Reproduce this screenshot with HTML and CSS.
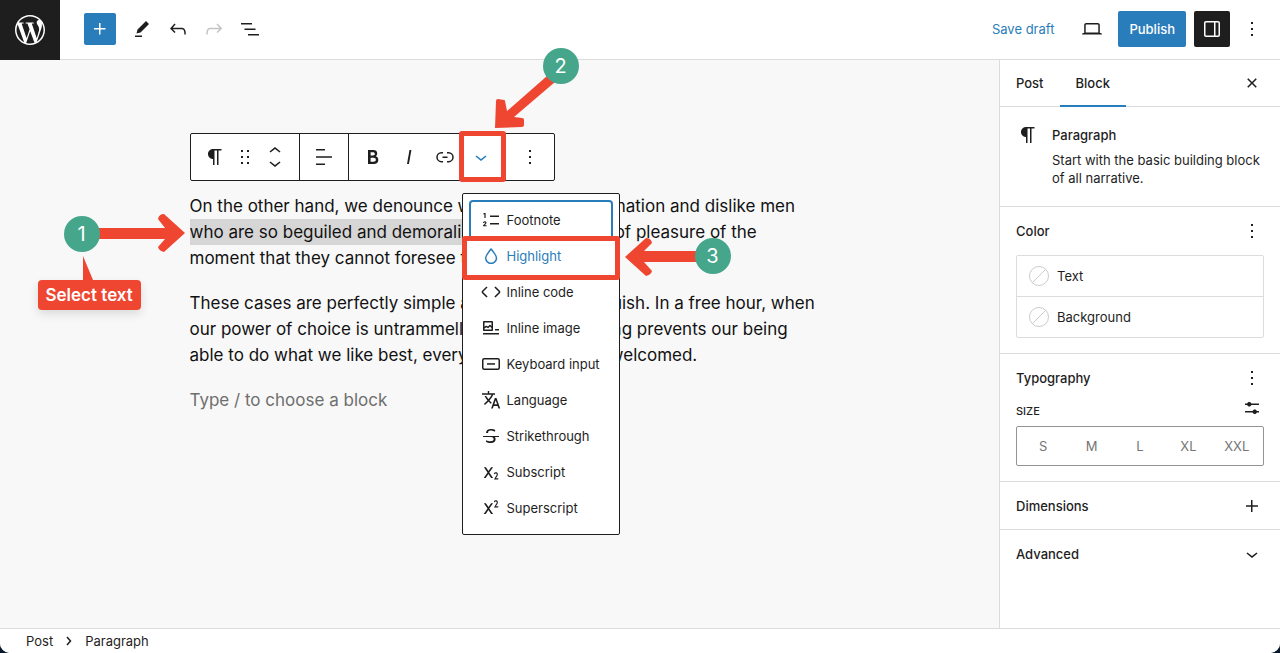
FILE: index.html
```html
<!DOCTYPE html>
<html lang="en">
<head>
    <meta charset="UTF-8">
    <meta name="viewport" content="width=device-width, initial-scale=1.0">
    <title>Edit Post</title>
    <link rel="stylesheet" href="styles.css">
</head>
<body>
    <div class="editor">
        <header class="header">
            <a class="logo" href="#" aria-label="View Posts">
                <svg width="30" height="30" viewBox="0 0 24 24"><path d="M21.469 6.825c.84 1.537 1.318 3.3 1.318 5.175 0 3.979-2.156 7.456-5.363 9.325l3.295-9.527c.615-1.54.82-2.771.82-3.864 0-.405-.026-.78-.07-1.11m-7.981.105c.647-.03 1.232-.105 1.232-.105.582-.075.514-.93-.067-.899 0 0-1.755.135-2.88.135-1.064 0-2.85-.15-2.85-.15-.585-.03-.661.855-.075.885 0 0 .54.061 1.125.09l1.68 4.605-2.37 7.08L5.354 6.9c.649-.03 1.234-.1 1.234-.1.585-.075.516-.93-.065-.896 0 0-1.746.138-2.874.138-.2 0-.438-.008-.69-.015C4.911 3.15 8.235 1.215 12 1.215c2.809 0 5.365 1.072 7.286 2.833-.046-.003-.091-.009-.141-.009-1.06 0-1.812.923-1.812 1.914 0 .89.513 1.643 1.06 2.531.411.72.89 1.643.89 2.977 0 .915-.354 1.994-.821 3.479l-1.075 3.585-3.9-11.61.001.014zM12 22.784c-1.059 0-2.081-.153-3.048-.437l3.237-9.406 3.315 9.087c.024.053.05.101.078.149-1.12.393-2.325.609-3.582.609M1.211 12c0-1.564.336-3.05.935-4.39L7.29 21.709C3.694 19.96 1.212 16.271 1.211 12M12 0C5.385 0 0 5.385 0 12s5.385 12 12 12 12-5.385 12-12S18.615 0 12 0"/></svg>
            </a>
            <div class="header-tools">
                <button class="inserter" aria-label="Add block">
                    <svg width="24" height="24" viewBox="0 0 24 24"><path d="M11 12.5V17.5H12.5V12.5H17.5V11H12.5V6H11V11H6V12.5H11Z"/></svg>
                </button>
                <div class="tool-group">
                    <button class="icon-button" aria-label="Tools">
                        <svg width="24" height="24" viewBox="0 0 24 24"><path d="m19 7-3-3-8.500 8.500-1 4 4-1L19 7Zm-7 11.500H5V20h7v-1.500Z"/></svg>
                    </button>
                    <button class="icon-button" aria-label="Undo">
                        <svg width="24" height="24" viewBox="0 0 24 24"><path d="M18.3 11.700c-.6-.6-1.400-.9-2.300-.9H6.700l2.900-3.300-1.100-1-4.500 5L8.500 16l1-1-2.700-2.700H16c.5 0 .9.2 1.300.5 1 1 1 3.400 1 4.500v.3h1.500v-.2c0-1.500 0-4.300-1.500-5.700z"/></svg>
                    </button>
                    <button class="icon-button" aria-label="Redo" disabled>
                        <svg width="24" height="24" viewBox="0 0 24 24"><path d="M15.600 6.500l-1.100 1 2.900 3.300H8c-.9 0-1.700.3-2.300.9-1.400 1.500-1.400 4.200-1.400 5.600v.2h1.500v-.3c0-1.100 0-3.500 1-4.500.3-.3.7-.5 1.300-.5h9.200L14.500 15l1.100 1.100 4.600-4.600-4.600-5z"/></svg>
                    </button>
                    <button class="icon-button" aria-label="Document overview">
                        <svg width="24" height="24" viewBox="0 0 24 24"><path d="M3 6h11v1.500H3V6Zm3.500 5.500h11V13h-11v-1.500ZM21 17H10v1.500h11V17Z"/></svg>
                    </button>
                </div>
            </div>
            <div class="header-settings">
                <button class="save-draft">Save draft</button>
                <button class="icon-button" aria-label="Preview">
                    <svg width="24" height="24" viewBox="0 0 24 24"><path d="M20.500 16h-.7V8c0-1.100-.9-2-2-2H6.200c-1.100 0-2 .9-2 2v8h-.7c-.8 0-1.500.7-1.500 1.500h20c0-.8-.7-1.500-1.500-1.500zM5.700 8c0-.3.2-.5.5-.5h11.600c.3 0 .5.2.5.5v7.600H5.700V8z"/></svg>
                </button>
                <button class="publish">Publish</button>
                <button class="icon-button pressed" aria-label="Settings">
                    <svg width="24" height="24" viewBox="0 0 24 24"><path d="M18 4H6c-1.100 0-2 .9-2 2v12c0 1.100.9 2 2 2h12c1.100 0 2-.9 2-2V6c0-1.100-.9-2-2-2zm-4 14.500H6c-.3 0-.5-.2-.5-.5V6c0-.3.2-.5.5-.5h8v13zm4.500-.5c0 .3-.2.5-.5.5h-2.500v-13H18c.3 0 .5.2.5.5v12z"/></svg>
                </button>
                <button class="icon-button narrow" aria-label="Options">
                    <svg width="24" height="24" viewBox="0 0 24 24"><path d="M13 19h-2v-2h2v2zm0-6h-2v-2h2v2zm0-6h-2V5h2v2z"/></svg>
                </button>
            </div>
        </header>

        <div class="body">
            <main class="canvas">
                <div class="post">
                    <div class="toolbar">
                        <div class="toolbar-group block-group">
                            <button class="icon-button" aria-label="Paragraph">
                                <svg width="24" height="24" viewBox="0 0 24 24"><path d="m9.996 14v-.225h.004v6.225h1.500v-14.500h2.500v14.500h1.500v-14.500h3v-1.500h-8.504c-2.761 0-5 2.239-5 5s2.239 5 5 5z"/></svg>
                            </button>
                            <button class="icon-button drag" aria-label="Drag">
                                <svg width="24" height="24" viewBox="0 0 24 24"><path d="M8 7h2V5H8v2zm0 6h2v-2H8v2zm0 6h2v-2H8v2zm6-14v2h2V5h-2zm0 8h2v-2h-2v2zm0 6h2v-2h-2v2z"/></svg>
                            </button>
                            <div class="movers">
                                <button aria-label="Move up"><svg width="24" height="24" viewBox="0 0 24 24"><path d="M6.500 12.400L12 8l5.500 4.400-.9 1.200L12 10l-4.500 3.600-1-1.200z"/></svg></button>
                                <button aria-label="Move down"><svg width="24" height="24" viewBox="0 0 24 24"><path d="M17.500 11.600L12 16l-5.500-4.400.9-1.200L12 14l4.500-3.600 1 1.200z"/></svg></button>
                            </div>
                        </div>
                        <div class="toolbar-group">
                            <button class="icon-button" aria-label="Align text">
                                <svg width="24" height="24" viewBox="0 0 24 24"><path d="M4 4h9v1.500H4zM4 11.200h16v1.500H4zM4 18.500h9V20H4z"/></svg>
                            </button>
                        </div>
                        <div class="toolbar-group">
                            <button class="icon-button" aria-label="Bold">
                                <svg width="24" height="24" viewBox="0 0 24 24"><path d="M14.700 11.300c1-.6 1.500-1.600 1.500-3 0-2.300-1.300-3.400-4-3.400H7v14h5.800c1.400 0 2.500-.3 3.300-1 .8-.7 1.200-1.700 1.200-2.900.1-1.900-.8-3.100-2.600-3.700zm-5.100-4h2.300c.6 0 1.100.1 1.400.4.3.3.5.7.5 1.200s-.2 1-.5 1.200c-.3.3-.8.4-1.400.4H9.600V7.300zm4.600 9c-.4.3-1 .4-1.700.4H9.600v-3.900h2.900c.7 0 1.300.2 1.700.5.4.3.6.8.6 1.500s-.2 1.200-.6 1.500z"/></svg>
                            </button>
                            <button class="icon-button" aria-label="Italic">
                                <svg width="24" height="24" viewBox="0 0 24 24"><path d="M12.500 5L10 19h1.900l2.500-14z"/></svg>
                            </button>
                            <button class="icon-button" aria-label="Link">
                                <svg width="24" height="24" viewBox="0 0 24 24"><path d="M10 17.389H8.444A5.194 5.194 0 1 1 8.444 7H10v1.500H8.444a3.694 3.694 0 0 0 0 7.389H10v1.500ZM14 7h1.556a5.194 5.194 0 0 1 0 10.390H14v-1.500h1.556a3.694 3.694 0 0 0 0-7.390H14V7Zm-4.500 6h5v-1.500h-5V13Z"/></svg>
                            </button>
                            <button class="icon-button more" aria-label="More" aria-expanded="true">
                                <svg width="24" height="24" viewBox="0 0 24 24"><path d="M17.500 11.600L12 16l-5.500-4.400.9-1.200L12 14l4.500-3.600 1 1.200z"/></svg>
                            </button>
                        </div>
                        <div class="toolbar-group">
                            <button class="icon-button" aria-label="Block options">
                                <svg width="24" height="24" viewBox="0 0 24 24"><path d="M13 19h-2v-2h2v2zm0-6h-2v-2h2v2zm0-6h-2V5h2v2z"/></svg>
                            </button>
                        </div>
                    </div>

                    <div class="content">
                        <p>On the other hand, we denounce with righteous indignation and dislike men <mark>who are so beguiled and demoralised</mark> by the charms of pleasure of the moment that they cannot foresee the pain</p>
                        <p>These cases are perfectly simple and easy to distinguish. In a free hour, when our power of choice is untrammelled and when nothing prevents our being able to do what we like best, every pleasure is to be welcomed.</p>
                        <input class="new-block" type="text" aria-label="Empty block" placeholder="Type / to choose a block">
                    </div>

                    <div class="menu">
                        <button class="focused">
                            <svg width="24" height="24" viewBox="0 0 24 24"><path d="M11 7.500h9V9h-9zM11 15h9v1.500h-9zM5 5h1.600v5H5.400V6.200L4.400 6.500V5.400zM4 15c.1-1 .8-1.700 1.800-1.700s1.700.6 1.700 1.500c0 .6-.3 1-.8 1.500l-1 1h1.900v1H4v-.9l1.900-1.900c.3-.3.4-.5.4-.8s-.2-.5-.5-.5-.6.3-.6.8z"/></svg>
                            Footnote
                        </button>
                        <button class="active">
                            <svg width="24" height="24" viewBox="0 0 24 24"><path d="M17.200 10.900c-.5-1-1.200-2.100-2.100-3.200-.6-.9-1.300-1.700-2.100-2.600L12 4l-1 1.100c-.6.9-1.300 1.700-2 2.600-.8 1.200-1.500 2.300-2 3.200-.6 1.200-1 2.200-1 3 0 3.400 2.700 6.100 6.100 6.100s6.100-2.700 6.100-6.100c0-.8-.3-1.800-1-3zm-5.100 7.600c-2.500 0-4.600-2.100-4.600-4.600 0-.3.1-1 .8-2.300.5-.9 1.100-1.900 2-3.100.7-.9 1.300-1.700 1.800-2.300.7.8 1.300 1.600 1.800 2.300.8 1.100 1.500 2.200 2 3.100.7 1.300.8 2 .8 2.300 0 2.500-2.100 4.600-4.600 4.600z"/></svg>
                            Highlight
                        </button>
                        <button>
                            <svg width="24" height="24" viewBox="0 0 24 24"><path d="M20.800 10.700l-4.300-4.300-1.100 1.100 4.300 4.300c.1.1.1.3 0 .4l-4.300 4.300 1.100 1.100 4.300-4.300c.7-.8.7-1.900 0-2.600zM4.200 11.800l4.300-4.300-1-1-4.300 4.300c-.7.7-.7 1.800 0 2.500l4.300 4.300 1.100-1.100-4.300-4.300c-.2-.1-.2-.3-.1-.4z"/></svg>
                            Inline code
                        </button>
                        <button>
                            <svg width="24" height="24" viewBox="0 0 24 24"><path d="M4 18.500h16V17H4v1.500zM16 13v1.500h4V13h-4zM5.100 15h7.800c.6 0 1.100-.5 1.100-1.100V6.100c0-.6-.5-1.100-1.100-1.100H5.100C4.500 5 4 5.500 4 6.100v7.800c0 .6.5 1.100 1.100 1.100zm.4-8.500h7V10l-1-1c-.3-.3-.8-.3-1 0l-1.600 1.500-1.200-.7c-.3-.2-.6-.2-.9 0l-1.300 1V6.500zm0 6.100l1.800-1.300 1.300.8c.3.2.7.2.9-.1l1.500-1.400 1.500 1.400v1.500h-7v-.9z"/></svg>
                            Inline image
                        </button>
                        <button>
                            <svg width="24" height="24" viewBox="0 0 24 24"><path d="M8 11.200h8v1.500H8z"/><rect class="stroke" x="3.750" y="6.750" width="16.500" height="10.500" rx="1.500"/></svg>
                            Keyboard input
                        </button>
                        <button>
                            <svg width="24" height="24" viewBox="0 0 24 24"><path d="M17.500 10h-1.700l-3.700 10.500h1.700l.9-2.600h3.900l.9 2.600h1.700L17.500 10zm-2.200 6.300 1.400-4 1.400 4h-2.800zm-4.800-3.800c1.600-1.800 2.900-3.600 3.700-5.700H16V5.200h-5.800V3H8.800v2.200H3v1.500h9.600c-.7 1.600-1.800 3.100-3.100 4.600C8.600 10.200 7.800 9 7.200 8H5.600c.6 1.400 1.700 2.900 2.900 4.400l-2.400 2.400c-.3.4-.7.8-1.100 1.200l1 1 1.200-1.200c.8-.8 1.600-1.500 2.300-2.300.8.9 1.700 1.700 2.500 2.500l.6-1.500c-.7-.6-1.400-1.300-2.100-2z"/></svg>
                            Language
                        </button>
                        <button>
                            <svg width="24" height="24" viewBox="0 0 24 24"><path d="M9.100 9v-.5c0-.6.2-1.100.7-1.400.5-.3 1.200-.5 2-.5.7 0 1.400.1 2.100.3.7.2 1.400.5 2.100.9l.2-1.900c-.6-.3-1.200-.5-1.900-.7-.8-.1-1.600-.2-2.400-.2-1.500 0-2.700.3-3.600 1-.8.7-1.200 1.500-1.200 2.600V9h2zM20 12H4v1h8.300c.3.1.6.2.8.3.5.2.9.5 1.100.8.3.3.4.7.4 1.200 0 .7-.2 1.100-.8 1.500-.5.3-1.200.5-2.100.5-.8 0-1.600-.1-2.400-.3-.8-.2-1.500-.5-2.200-.8L7 18.100c.5.2 1.200.4 2 .6.8.2 1.600.3 2.400.3 1.700 0 3-.3 3.900-1 .9-.7 1.300-1.600 1.300-2.800 0-.9-.2-1.700-.7-2.200H20v-1z"/></svg>
                            Strikethrough
                        </button>
                        <button>
                            <svg width="24" height="24" viewBox="0 0 24 24"><path d="M16.900 18.300l.8-1.200c.4-.6.7-1.200.9-1.600.2-.4.3-.8.3-1.200 0-.3-.1-.7-.3-1-.1-.3-.4-.5-.6-.7-.3-.2-.6-.3-1-.3s-.8.1-1.100.2c-.3.1-.7.3-1 .6l.2 1.300c.3-.3.5-.5.8-.6s.6-.2.9-.2c.3 0 .5.1.7.2.2.2.2.4.2.7 0 .3-.1.5-.2.8-.1.3-.4.7-.8 1.300L15 19.400h4.300v-1.200h-2.400zM14.100 7.200h-2L9.500 11 6.900 7.200h-2l3.600 5.300L4.700 18h2l2.700-4 2.700 4h2l-3.800-5.500 3.800-5.300z"/></svg>
                            Subscript
                        </button>
                        <button>
                            <svg width="24" height="24" viewBox="0 0 24 24"><path d="M16.900 10.300l.8-1.200c.4-.6.7-1.200.9-1.600.2-.4.3-.8.3-1.200 0-.3-.1-.7-.3-1-.1-.3-.4-.5-.6-.7-.3-.2-.6-.3-1-.3s-.8.1-1.100.2c-.3.1-.7.3-1 .6l.2 1.300c.3-.3.5-.5.8-.6s.6-.2.9-.2c.3 0 .5.1.7.2.2.2.2.4.2.7 0 .3-.1.5-.2.8-.1.3-.4.7-.8 1.300L15 11.400h4.300v-1.200h-2.400zM14.100 7.200h-2L9.500 11 6.900 7.200h-2l3.600 5.300L4.700 18h2l2.700-4 2.700 4h2l-3.800-5.500 3.800-5.300z"/></svg>
                            Superscript
                        </button>
                    </div>

                    <!-- Tutorial steps drawn over the editor -->
                    <div class="frame frame-more"></div>
                    <div class="frame frame-highlight"></div>
                    <svg class="arrow arrow-1" width="88" height="40" viewBox="0 0 88 40"><path d="M0 15h67l-7-9q1-5 6-5l21 19-21 19q-5-1-6-5l7-8H0z"/></svg>
                    <svg class="arrow arrow-2" width="60" height="60" viewBox="0 0 60 60"><path d="M52 4 12 39 10 29q0-1-1-1l-6-1q-2 0-2 2L0 56l27-1q2 0 2-2v-5q0-2-2-2l-8-1L60 10z"/></svg>
                    <svg class="arrow arrow-3" width="76" height="40" viewBox="0 0 76 40"><path d="M76 14H19l8-8q-1-5-6-5L0 20l21 19q5-1 6-5l-8-9h57z"/></svg>
                    <span class="step step-1">1</span>
                    <span class="step step-2">2</span>
                    <span class="step step-3">3</span>
                    <div class="callout">
                        <svg width="10" height="24" viewBox="0 0 10 24"><path d="M0 0v24h10z"/></svg>
                        <span>Select text</span>
                    </div>
                </div>
            </main>

            <aside class="sidebar">
                <div class="tabs">
                    <button>Post</button>
                    <button class="selected">Block</button>
                    <button class="icon-button close" aria-label="Close settings">
                        <svg width="24" height="24" viewBox="0 0 24 24"><path d="M12 13.060l3.712 3.713 1.061-1.060L13.061 12l3.712-3.712-1.060-1.060L12 10.938 8.288 7.227l-1.061 1.060L10.939 12l-3.712 3.712 1.060 1.061L12 13.061z"/></svg>
                    </button>
                </div>
                <section class="block-card">
                    <svg width="24" height="24" viewBox="0 0 24 24"><path d="m9.996 14v-.225h.004v6.225h1.500v-14.500h2.500v14.500h1.500v-14.500h3v-1.500h-8.504c-2.761 0-5 2.239-5 5s2.239 5 5 5z"/></svg>
                    <div>
                        <h2>Paragraph</h2>
                        <p>Start with the basic building block of all narrative.</p>
                    </div>
                </section>
                <section class="panel">
                    <div class="panel-header">
                        <h2>Color</h2>
                        <button aria-label="Color options"><svg width="24" height="24" viewBox="0 0 24 24"><path d="M13 19h-2v-2h2v2zm0-6h-2v-2h2v2zm0-6h-2V5h2v2z"/></svg></button>
                    </div>
                    <div class="colors">
                        <button><span class="swatch"></span>Text</button>
                        <button><span class="swatch"></span>Background</button>
                    </div>
                </section>
                <section class="panel typography">
                    <div class="panel-header">
                        <h2>Typography</h2>
                        <button aria-label="Typography options"><svg width="24" height="24" viewBox="0 0 24 24"><path d="M13 19h-2v-2h2v2zm0-6h-2v-2h2v2zm0-6h-2V5h2v2z"/></svg></button>
                    </div>
                    <div class="size-header">
                        <h3 id="size-label">SIZE</h3>
                        <button aria-label="Set custom size"><svg width="24" height="24" viewBox="0 0 24 24"><path d="m19 7.500h-7.628c-.309-.874-1.142-1.500-2.122-1.500s-1.813.626-2.122 1.500H5v1.500h2.128c.309.874 1.142 1.500 2.122 1.500s1.813-.626 2.122-1.500h7.628zM19 15h-2.128c-.309-.874-1.142-1.500-2.122-1.500s-1.813.626-2.122 1.500H5v1.500h7.628c.309.874 1.142 1.500 2.122 1.500s1.813-.626 2.122-1.500h2.128z"/></svg></button>
                    </div>
                    <div class="sizes" role="radiogroup" aria-labelledby="size-label">
                        <label><input type="radio" name="size" value="s">S</label>
                        <label><input type="radio" name="size" value="m">M</label>
                        <label><input type="radio" name="size" value="l">L</label>
                        <label><input type="radio" name="size" value="xl">XL</label>
                        <label><input type="radio" name="size" value="xxl">XXL</label>
                    </div>
                </section>
                <section class="panel collapsed">
                    <div class="panel-header">
                        <h2>Dimensions</h2>
                        <button aria-label="Dimensions options"><svg width="24" height="24" viewBox="0 0 24 24"><path d="M11 12.750V18H12.500V12.750H18V11.250H12.500V6H11V11.250H6V12.750H11Z"/></svg></button>
                    </div>
                </section>
                <section class="panel collapsed last">
                    <div class="panel-header">
                        <h2>Advanced</h2>
                        <button aria-label="Open Advanced"><svg width="24" height="24" viewBox="0 0 24 24"><path d="M17.500 11.600L12 16l-5.500-4.400.9-1.200L12 14l4.500-3.600 1 1.200z"/></svg></button>
                    </div>
                </section>
            </aside>
        </div>

        <footer class="footer">
            <a href="#">Post</a>
            <svg width="6" height="10" viewBox="0 0 6 10"><path class="stroke" d="M1 1l3.500 4L1 9"/></svg>
            <span>Paragraph</span>
        </footer>
    </div>
</body>
</html>
```

FILE: styles.css
```css
* {
    box-sizing: border-box;
}
body {
    margin: 0;
    background-color: #06182c;
    color: #1e1e1e;
    font-family: Inter, "Liberation Sans", sans-serif;
    font-size: 13px;
    line-height: 18px;
}
h2, h3, p {
    margin: 0;
}
h2, h3 {
    font-size: 13px;
    font-weight: 500;
}
svg {
    display: block;
    flex-shrink: 0;
    fill: currentColor;
}
.stroke {
    fill: none;
    stroke: currentColor;
    stroke-width: 1.5;
}
button {
    display: flex;
    align-items: center;
    padding: 0;
    border: none;
    border-radius: 2px;
    background: none;
    color: inherit;
    font: inherit;
    cursor: pointer;
}
button:disabled {
    color: #c4c4c4;
}
a {
    color: inherit;
    text-decoration: none;
}
.icon-button {
    justify-content: center;
    width: 36px;
    height: 36px;
}
.icon-button.narrow {
    width: 28px;
}
.icon-button.pressed {
    background-color: #1e1e1e;
    color: #fff;
}
.editor {
    display: flex;
    flex-direction: column;
    height: 100vh;
    overflow: hidden;
    border-radius: 0 0 10px 10px;
    background-color: #fff;
}

/* Header */
.header {
    display: flex;
    align-items: center;
    justify-content: space-between;
    height: 60px;
    padding: 0 14px 1px 0;
    border-bottom: 1px solid #dcdcdc;
}
.logo {
    display: flex;
    align-items: center;
    justify-content: center;
    align-self: flex-start;
    width: 60px;
    height: 60px;
    background-color: #1e1e1e;
    color: #fff;
}
.header-tools {
    display: flex;
    align-items: center;
    gap: 8px;
    flex: 1;
    padding-left: 24px;
}
.tool-group, .header-settings {
    display: flex;
    align-items: center;
}
.header-settings {
    gap: 8px;
}
.inserter {
    justify-content: center;
    width: 32px;
    height: 32px;
    background-color: #2a7dbb;
    color: #fff;
}
.save-draft {
    height: 36px;
    padding: 0 12px;
    color: #2a7dbb;
}
.publish {
    height: 36px;
    padding: 0 11px;
    background-color: #2a7dbb;
    color: #fff;
    font-weight: 500;
}

/* Canvas */
.body {
    display: flex;
    flex: 1;
    min-height: 0;
}
.canvas {
    flex: 1;
    padding: 73px 20px 0;
    background-color: #f8f8f8;
}
.post {
    position: relative;
    max-width: 620px;
    margin: 0 auto;
}
.toolbar {
    display: flex;
    width: max-content;
    height: 48px;
    border: 1px solid #1e1e1e;
    border-radius: 2px;
    background-color: #fff;
}
.toolbar-group {
    display: flex;
    align-items: center;
    padding: 0 6px;
}
.toolbar-group + .toolbar-group {
    border-left: 1px solid #1e1e1e;
}
.block-group .drag {
    width: 24px;
}
.movers {
    display: flex;
    flex-direction: column;
}
.movers button {
    justify-content: center;
    width: 36px;
    height: 12px;
}
.toolbar .more {
    color: #2a7dbb;
}
.content {
    display: flex;
    flex-direction: column;
    gap: 19px;
    margin-right: -8px;
    padding-top: 12px;
    color: #111;
    font-size: 17px;
    line-height: 26px;
}
mark {
    padding: 3px 0;
    background-color: #d6d6d6;
    color: inherit;
}
.new-block {
    width: 100%;
    height: 26px;
    padding: 0;
    border: none;
    background: none;
    font: inherit;
}
.new-block::placeholder {
    color: #6e6e6e;
}

/* Dropdown menu */
.menu {
    position: absolute;
    top: 60px;
    left: 272px;
    width: 158px;
    padding: 8px;
    border: 1px solid #1e1e1e;
    border-radius: 2px;
    background-color: #fff;
}
.menu button {
    gap: 4px;
    width: 100%;
    height: 36px;
    padding: 0 8px;
    white-space: nowrap;
}
.menu .focused {
    box-shadow: 0 0 0 2px #2a7dbb;
}
.menu .active {
    color: #2a7dbb;
}

/* Tutorial steps */
.frame {
    position: absolute;
    border: 5px solid #ee4631;
    border-radius: 3px;
}
.frame-more {
    top: -2px;
    left: 269px;
    width: 47px;
    height: 51px;
}
.frame-highlight {
    top: 103px;
    left: 272px;
    width: 158px;
    height: 44px;
}
.arrow {
    position: absolute;
    color: #ee4631;
}
.arrow-1 {
    top: 80px;
    left: -92px;
}
.arrow-2 {
    top: -61px;
    left: 305px;
}
.arrow-3 {
    top: 104px;
    left: 435px;
}
.step {
    position: absolute;
    width: 36px;
    height: 36px;
    border-radius: 50%;
    background-color: #46a68b;
    color: #fff;
    font-size: 20px;
    line-height: 36px;
    text-align: center;
}
.step-1 {
    top: 83px;
    left: -126px;
}
.step-2 {
    top: -85px;
    left: 353px;
}
.step-3 {
    top: 105px;
    left: 505px;
}
.callout {
    position: absolute;
    top: 123px;
    left: -152px;
    color: #ee4631;
}
.callout svg {
    margin-left: 45px;
}
.callout span {
    display: block;
    height: 30px;
    padding: 0 8px;
    border-radius: 4px;
    background-color: #ee4631;
    box-shadow: 0 4px 10px rgba(0, 0, 0, 0.12);
    color: #fff;
    font-size: 17px;
    font-weight: 600;
    line-height: 30px;
    white-space: nowrap;
}

/* Sidebar */
.sidebar {
    width: 281px;
    border-left: 1px solid #dcdcdc;
    background-color: #fff;
}
.tabs {
    display: flex;
    align-items: center;
    height: 47px;
    padding-right: 10px;
    border-bottom: 1px solid #dcdcdc;
    font-weight: 500;
}
.tabs button:not(.close) {
    height: 47px;
    padding: 0 16px;
    border-radius: 0;
}
.tabs .selected {
    box-shadow: inset 0 -2px #2a7dbb;
}
.tabs .close {
    margin-left: auto;
}
.block-card {
    display: flex;
    gap: 12px;
    padding: 16px 16px 19px;
    border-bottom: 1px solid #dcdcdc;
}
.block-card h2 {
    margin-bottom: 4px;
    line-height: 24px;
}
.panel {
    padding: 12px 16px 15px;
    border-bottom: 1px solid #dcdcdc;
}
.panel-header, .size-header {
    display: flex;
    align-items: center;
    justify-content: space-between;
    height: 24px;
}
.colors {
    margin-top: 12px;
    border: 1px solid #dcdcdc;
    border-radius: 2px;
}
.colors button {
    gap: 8px;
    width: 100%;
    height: 40px;
    padding: 0 12px;
}
.colors button + button {
    height: 41px;
    border-top: 1px solid #dcdcdc;
    border-radius: 0;
}
.swatch {
    width: 20px;
    height: 20px;
    border: 1px solid #ccc;
    border-radius: 50%;
    background: linear-gradient(135deg, transparent 48%, #ccc 48%, #ccc 52%, transparent 52%);
}
.size-header {
    margin-top: 6px;
}
.size-header h3 {
    align-self: flex-end;
    font-size: 11px;
}
.sizes {
    display: grid;
    grid-template-columns: repeat(5, 1fr);
    height: 40px;
    margin-top: 6px;
    padding: 0 2px;
    border: 1px solid #949494;
    border-radius: 2px;
    color: #757575;
}
.sizes label {
    display: flex;
    align-items: center;
    justify-content: center;
    cursor: pointer;
}
.sizes input {
    appearance: none;
    width: 0;
    margin: 0;
}
.collapsed {
    padding: 12px 16px 11px;
}
.panel.last {
    border-bottom: none;
}

/* Footer */
.footer {
    display: flex;
    align-items: center;
    gap: 13px;
    height: 25px;
    padding-left: 26px;
    border-top: 1px solid #dcdcdc;
    background-color: #fff;
}
```
